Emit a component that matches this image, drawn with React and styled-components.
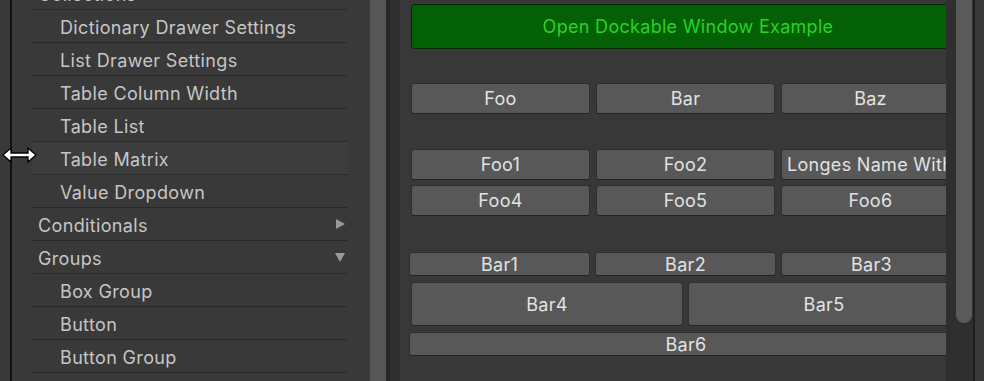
import React from 'react';
import styled, { createGlobalStyle } from 'styled-components';

const GlobalStyle = createGlobalStyle`
    html, body {
        margin: 0;
        padding: 0;
        background: #2d2d2d;
        overflow: hidden;
    }
    body {
        font-family: Inter, "Noto Sans", "Liberation Sans", sans-serif;
    }
`;

const Window = styled.div`
    position: relative;
    display: flex;
    width: 984px;
    height: 381px;
    overflow: hidden;
`;

const Gutter = styled.div`
    width: 10px;
    background: #393939;
    border-right: 2px solid #121212;
`;

const Sidebar = styled.div`
    width: 358px;
    background: #393939;
    overflow: hidden;
`;

const TreeList = styled.ul`
    list-style: none;
    margin: -23px 0 0 20px;
    padding: 0;
    width: 316px;
`;

const TreeRow = styled.li`
    position: relative;
    display: flex;
    align-items: center;
    height: 33px;
    box-sizing: border-box;
    padding-top: 2px;
    border-bottom: 1px solid #2a2a2a;
    padding-left: ${p => (p.$child ? 28 : 6)}px;
    background: ${p => (p.$hover ? '#3d3d3d' : 'transparent')};
    color: #c6c6c6;
    font-size: 18px;
    letter-spacing: 0.35px;
    white-space: nowrap;
`;

const Arrow = styled.span`
    margin-left: auto;
    margin-right: 2px;
    margin-top: -2px;
    display: flex;
    align-items: center;
`;

const SideScroll = styled.div`
    width: 16px;
    background: #565656;
`;

const Divider = styled.div`
    width: 14px;
    background: #303030;
    border-left: 4px solid #282828;
    box-sizing: border-box;
`;

const Main = styled.div`
    width: 546px;
    background: #383838;
    overflow: hidden;
    padding: 4px 0 0 9px;
    box-sizing: border-box;
`;

const Content = styled.div`
    width: 556px;
    display: flex;
    flex-direction: column;
`;

const GreenButton = styled.div`
    margin-left: 2px;
    height: 45px;
    box-sizing: border-box;
    background: #046004;
    border: 1px solid #022b02;
    border-radius: 3px;
    display: flex;
    align-items: center;
    justify-content: center;
    color: #27d327;
    font-size: 18px;
    letter-spacing: 0.3px;
`;

const ButtonRow = styled.div`
    display: grid;
    grid-template-columns: ${p => p.$cols};
    column-gap: ${p => p.$gap || 5}px;
    margin-top: ${p => p.$top}px;
    margin-left: ${p => p.$left || 0}px;
    height: ${p => p.$h}px;
`;

const Btn = styled.div`
    box-sizing: border-box;
    background: #585858;
    border: 1px solid #2e2e2e;
    border-bottom-color: #232323;
    border-radius: 3px;
    display: flex;
    align-items: center;
    justify-content: center;
    color: #e2e2e2;
    font-size: 18px;
    letter-spacing: 0.3px;
    white-space: nowrap;
    overflow: hidden;
`;

const LongBtn = styled(Btn)`
    justify-content: flex-start;
    padding-left: 5px;
`;

const RightScroll = styled.div`
    width: 29px;
    background: #2f2f2f;
    border-right: 2px solid #1f1f1f;
    padding-left: 10px;
    box-sizing: border-box;
`;

const Thumb = styled.div`
    width: 16px;
    height: 323px;
    background: #5a5a5a;
    border-radius: 0 0 8px 8px;
`;

const Filler = styled.div`
    flex: 1;
    background: #393939;
`;

const Cursor = styled.svg`
    position: absolute;
    left: 2px;
    top: 147px;
`;

const RightTri = () => (
    <svg width="11" height="12" viewBox="0 0 11 12"><path d="M1 1 L10 6 L1 11 Z" fill="#9a9a9a" /></svg>
);

const DownTri = () => (
    <svg width="12" height="11" viewBox="0 0 12 11"><path d="M1 1 L11 1 L6 10 Z" fill="#9a9a9a" /></svg>
);

const items = [
    { label: 'Collections' },
    { label: 'Dictionary Drawer Settings', child: true },
    { label: 'List Drawer Settings', child: true },
    { label: 'Table Column Width', child: true },
    { label: 'Table List', child: true },
    { label: 'Table Matrix', child: true, hover: true },
    { label: 'Value Dropdown', child: true },
    { label: 'Conditionals', arrow: 'right' },
    { label: 'Groups', arrow: 'down' },
    { label: 'Box Group', child: true },
    { label: 'Button', child: true },
    { label: 'Button Group', child: true },
    { label: 'Foldout Group', child: true },
];

const App = () => {
    return (
        <Window>
            <GlobalStyle />
            <Gutter />
            <Sidebar>
                <TreeList>
                    {items.map(it => (
                        <TreeRow key={it.label} $child={it.child} $hover={it.hover}>
                            {it.label}
                            {it.arrow && (
                                <Arrow>{it.arrow === 'right' ? <RightTri /> : <DownTri />}</Arrow>
                            )}
                        </TreeRow>
                    ))}
                </TreeList>
            </Sidebar>
            <SideScroll />
            <Divider />
            <Main>
                <Content>
                    <GreenButton>Open Dockable Window Example</GreenButton>
                    <ButtonRow $cols="repeat(3, 179px)" $gap={6} $top={34} $left={2} $h={31}>
                        <Btn>Foo</Btn>
                        <Btn>Bar</Btn>
                        <Btn>Baz</Btn>
                    </ButtonRow>
                    <ButtonRow $cols="repeat(3, 179px)" $gap={6} $top={35} $left={2} $h={31}>
                        <Btn>Foo1</Btn>
                        <Btn>Foo2</Btn>
                        <LongBtn>Longes Name Without Spaces</LongBtn>
                    </ButtonRow>
                    <ButtonRow $cols="repeat(3, 179px)" $gap={6} $top={5} $left={2} $h={31}>
                        <Btn>Foo4</Btn>
                        <Btn>Foo5</Btn>
                        <Btn>Foo6</Btn>
                    </ButtonRow>
                    <ButtonRow $cols="repeat(3, 181px)" $gap={5} $top={36} $h={24}>
                        <Btn>Bar1</Btn>
                        <Btn>Bar2</Btn>
                        <Btn>Bar3</Btn>
                    </ButtonRow>
                    <ButtonRow $cols="272px 272px" $gap={5} $top={6} $left={2} $h={44}>
                        <Btn>Bar4</Btn>
                        <Btn>Bar5</Btn>
                    </ButtonRow>
                    <ButtonRow $cols="554px" $top={6} $h={24}>
                        <Btn>Bar6</Btn>
                    </ButtonRow>
                </Content>
            </Main>
            <RightScroll>
                <Thumb />
            </RightScroll>
            <Filler />
            <Cursor width="35" height="16" viewBox="0 0 35 16">
                <path d="M1 8 L9 1 L9 6 L26 6 L26 1 L34 8 L26 15 L26 10 L9 10 L9 15 Z" fill="#ffffff" stroke="#000000" strokeWidth="1.3" strokeLinejoin="miter" />
            </Cursor>
        </Window>
    );
};

export default App;
